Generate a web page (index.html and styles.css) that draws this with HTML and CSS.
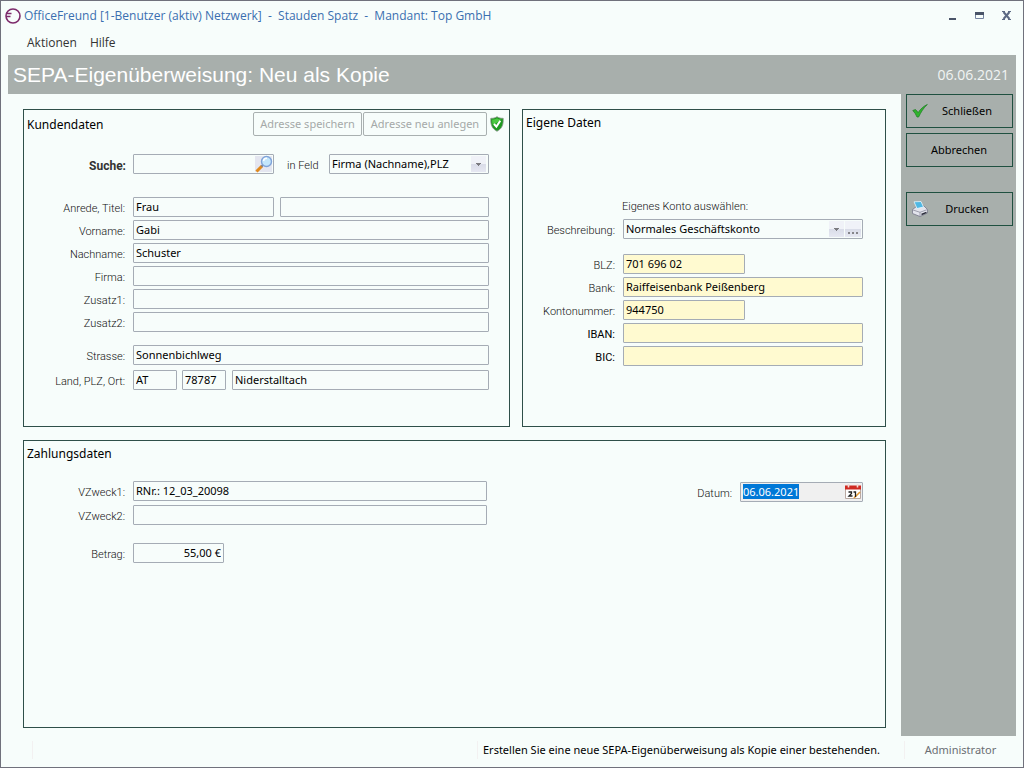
FILE: index.html
```html
<!DOCTYPE html>
<html lang="de">
<head>
<meta charset="utf-8">
<title>OfficeFreund</title>
<link rel="stylesheet" href="styles.css">
</head>
<body>
<div class="window">
  <header class="titlebar">
    <svg class="logo" viewBox="0 0 16 16" width="16" height="16" aria-hidden="true">
      <circle cx="8" cy="8" r="7" fill="none" stroke="#7d2a6b" stroke-width="1.6"/>
      <path d="M1 5.500H6.500M1 8.500H5.500" fill="none" stroke="#7d2a6b" stroke-width="1.4"/>
    </svg>
    <h1 class="caption">OfficeFreund [1-Benutzer (aktiv) Netzwerk] &nbsp;-&nbsp; Stauden Spatz &nbsp;-&nbsp; Mandant: Top GmbH</h1>
    <div class="window-buttons">
      <button type="button" aria-label="Minimieren"><svg viewBox="0 0 10 10" width="10" height="10"><path d="M1 7H8V9H1Z" fill="#4a5468"/></svg></button>
      <button type="button" aria-label="Maximieren"><svg viewBox="0 0 10 10" width="10" height="10"><path d="M.5 1.500H8.500V7.500H.5Z" fill="#f7fdfb" stroke="#7583a0"/><path d="M0 1H9V4H0Z" fill="#4a5468"/></svg></button>
      <button type="button" aria-label="Fenster schließen"><svg viewBox="0 0 10 10" width="10" height="10"><path d="M1.500 1L7.500 8M7.500 1L1.500 8" stroke="#5d6a84" stroke-width="2"/><path d="M0 .5H3M6 .5H9M0 8.500H3M6 8.500H9" stroke="#5d6a84"/></svg></button>
    </div>
  </header>
  <nav class="menubar">
    <button type="button">Aktionen</button>
    <button type="button">Hilfe</button>
  </nav>
  <div class="banner">
    <h2>SEPA-Eigenüberweisung: Neu als Kopie</h2>
    <time datetime="2021-06-06">06.06.2021</time>
  </div>
  <div class="body">
    <main class="content">
      <section class="panel customer">
        <div class="panel-head">
          <h3>Kundendaten</h3>
          <button type="button" class="flat" disabled>Adresse speichern</button>
          <button type="button" class="flat wide" disabled>Adresse neu anlegen</button>
          <svg class="shield" viewBox="0 0 14 16" width="14" height="16" aria-hidden="true">
            <path d="M7 .7C9 2 11 2.400 13.200 2.300C13.500 8 12.500 12.500 7 15.300C1.500 12.500 .5 8 .8 2.300C3 2.400 5 2 7 .7Z" fill="#1f9a20" stroke="#8a938c" stroke-width=".8"/>
            <path d="M7 2.200C5.500 3.200 4 3.500 2.200 3.600C2.100 6 2.300 7.500 3 9.300L11.700 3.600C10 3.500 8.500 3.200 7 2.200Z" fill="#4cc842"/>
            <path d="M4 8L6.400 10.600L10.300 4.800" fill="none" stroke="#fff" stroke-width="2"/>
          </svg>
        </div>
        <div class="row search">
          <label for="suche" class="strong">Suche:</label>
          <div class="box">
            <input id="suche" type="text">
            <button type="button" class="in-box" aria-label="Suchen">
              <svg viewBox="0 0 18 18" width="18" height="18"><path d="M0 1H17V17H0Z" fill="#e4e6f0"/><path d="M1.500 16.500L7 11" stroke="#e08a1e" stroke-width="3"/><path d="M6.500 11.500L8 10" stroke="#7b808c" stroke-width="2"/><circle cx="11.500" cy="6.500" r="5" fill="#c3e6fb" stroke="#7fa3d8" stroke-width="1.400"/><path d="M8.500 6A3.200 3.200 0 0 1 12 3.400" fill="none" stroke="#fff" stroke-width="1.500"/></svg>
            </button>
          </div>
          <label for="feld" class="mid">in Feld</label>
          <select id="feld"><option>Firma (Nachname),PLZ</option></select>
        </div>
        <div class="fields">
          <div class="row title-row"><label for="anrede">Anrede, Titel:</label><input id="anrede" type="text" value="Frau"><input type="text" aria-label="Titel"></div>
          <div class="row"><label for="vorname">Vorname:</label><input id="vorname" type="text" value="Gabi"></div>
          <div class="row"><label for="nachname">Nachname:</label><input id="nachname" type="text" value="Schuster"></div>
          <div class="row"><label for="firma">Firma:</label><input id="firma" type="text"></div>
          <div class="row"><label for="zusatz1">Zusatz1:</label><input id="zusatz1" type="text"></div>
          <div class="row"><label for="zusatz2">Zusatz2:</label><input id="zusatz2" type="text"></div>
        </div>
        <div class="fields address">
          <div class="row"><label for="strasse">Strasse:</label><input id="strasse" type="text" value="Sonnenbichlweg"></div>
          <div class="row city-row"><label for="land">Land, PLZ, Ort:</label><input id="land" type="text" value="AT"><input type="text" aria-label="PLZ" value="78787"><input type="text" aria-label="Ort" value="Niderstalltach"></div>
        </div>
      </section>

      <section class="panel own">
        <h3>Eigene Daten</h3>
        <p class="hint">Eigenes Konto auswählen:</p>
        <div class="row account">
          <label for="konto">Beschreibung:</label>
          <div class="box">
            <select id="konto"><option>Normales Geschäftskonto</option></select>
            <button type="button" class="in-box dots" aria-label="Konten bearbeiten"><svg viewBox="0 0 12 4" width="12" height="4"><path d="M1 1H3V3H1ZM5 1H7V3H5ZM9 1H11V3H9Z" fill="#85858a"/></svg></button>
          </div>
        </div>
        <div class="fields bank">
          <div class="row"><label for="blz">BLZ:</label><input id="blz" class="short" type="text" value="701 696 02"></div>
          <div class="row"><label for="bank">Bank:</label><input id="bank" type="text" value="Raiffeisenbank Peißenberg"></div>
          <div class="row"><label for="nummer">Kontonummer:</label><input id="nummer" class="short" type="text" value="944750"></div>
          <div class="row"><label for="iban" class="dark">IBAN:</label><input id="iban" type="text"></div>
          <div class="row"><label for="bic" class="dark">BIC:</label><input id="bic" type="text"></div>
        </div>
      </section>

      <section class="panel payment">
        <h3>Zahlungsdaten</h3>
        <div class="payment-cols">
          <div class="fields purpose">
            <div class="row"><label for="vz1">VZweck1:</label><input id="vz1" type="text" value="RNr.: 12_03_20098"></div>
            <div class="row"><label for="vz2">VZweck2:</label><input id="vz2" type="text"></div>
            <div class="row amount"><label for="betrag">Betrag:</label><input id="betrag" type="text" value="55,00 €"></div>
          </div>
          <div class="date">
            <label for="datum">Datum:</label>
            <div class="box">
              <input id="datum" type="text" value="06.06.2021">
              <button type="button" class="in-box" aria-label="Kalender">
                <svg viewBox="0 0 16 16" width="16" height="16"><path d="M.5 3.500H15.500V14.500H.5Z" fill="#fff" stroke="#b9a9a2"/><path d="M0 1.500H16V5.500H0Z" fill="#cf2a22"/><path d="M3.500 0V3.500M12.500 0V3.500" stroke="#f3dcd8" stroke-width="1.600"/><path d="M9 14L15 8" stroke="#e59a35" stroke-width="1.600"/><path d="M3.500 8H6.500L6.500 9.500L4 12H7.500M8.500 8H10.500V13" fill="none" stroke="#222" stroke-width="1.300"/></svg>
              </button>
            </div>
          </div>
        </div>
      </section>
    </main>
    <aside class="actions">
      <button type="button" class="action">
        <svg viewBox="0 0 16 16" width="16" height="16" aria-hidden="true"><path d="M.8 7.500L3.500 6.500L6.200 9.600C8.500 6 11.500 3.200 15.300 1.500C11.500 5 9 9 6.600 14L5 14C4 11.500 2.700 9.400 .8 7.500Z" fill="#2fb52c" stroke="#25802a" stroke-width=".8"/></svg>
        <span>Schließen</span>
      </button>
      <button type="button" class="action"><span>Abbrechen</span></button>
      <button type="button" class="action print">
        <svg viewBox="0 0 16 16" width="16" height="16" aria-hidden="true"><path d="M.5 8.500L4.500 5.500L12 5L15.500 8.500V12L8 15.500L.5 12.500Z" fill="#e3e4ec" stroke="#77798a" stroke-width=".8"/><path d="M2 .8L9 .5L11.500 6L5 7.500Z" fill="#4fb8e4" stroke="#e9f6fb" stroke-width=".8"/><path d="M.5 8.800L8 11.300L15.500 8.500M8 11.300V15.500" fill="none" stroke="#8a8c9c" stroke-width=".8"/><path d="M9.500 13.500L14.500 11.300" stroke="#2b2d3a" stroke-width="1.400"/></svg>
        <span>Drucken</span>
      </button>
    </aside>
  </div>
  <footer class="statusbar">
    <span class="cell spacer"></span>
    <span class="cell message">Erstellen Sie eine neue SEPA-Eigenüberweisung als Kopie einer bestehenden.</span>
    <span class="cell user">Administrator</span>
  </footer>
</div>
<script src="app.js"></script>
</body>
</html>
```
FILE: styles.css
```css
* { box-sizing: border-box; }

body {
  margin: 0;
  font: 12px/16px "Noto Sans", "Open Sans", sans-serif;
  color: #000;
  background: #f7fdfb;
}

h1, h2, h3, p { margin: 0; font-weight: 400; }
button, input, select { font: inherit; font-size: 11px; color: inherit; }
button { padding: 0; border: 0; background: none; }

.window {
  display: flex;
  flex-direction: column;
  min-height: 100vh;
  border: 1px solid #70717c;
}

.titlebar {
  display: flex;
  align-items: center;
  height: 30px;
  padding: 0 11px 0 4px;
}
.caption {
  flex: 1;
  margin-left: 3px;
  font: 12px/16px "Open Sans", "Noto Sans", sans-serif;
  color: #3a6fb0;
}
.window-buttons { display: flex; gap: 17px; }
.window-buttons button { display: flex; width: 10px; }

.menubar {
  display: flex;
  align-items: center;
  gap: 13px;
  height: 24px;
  padding-left: 26px;
  color: #333;
}
.menubar button { font: 12px/16px "Open Sans", "Noto Sans", sans-serif; }

.banner {
  display: flex;
  align-items: center;
  justify-content: space-between;
  height: 39px;
  margin: 0 7px;
  padding: 0 7px 0 5px;
  color: #fff;
  background: #a8afac;
}
.banner h2 { font: 21px/24px "Liberation Sans", Arial, sans-serif; }
.banner time { font: 14px/18px "Open Sans", "Noto Sans", sans-serif; color: #f1f4f3; }

.body { display: flex; flex: 1; margin: 0 7px; }

.content {
  flex: 1;
  display: grid;
  grid-template-columns: 487fr 364fr;
  grid-template-rows: auto 1fr;
  gap: 13px 12px;
  padding: 15px 15px 8px;
}

.panel { border: 1px solid #2f4f49; }
.panel h3 { font-size: 12px; line-height: 18px; }

.row { display: flex; align-items: center; }
.row > input { flex: 1; min-width: 0; }
.fields { display: flex; flex-direction: column; gap: 3px; }

label, .hint {
  font-family: Roboto, sans-serif;
  font-size: 11px;
  font-weight: 300;
  color: #111;
}
.row > label:first-child {
  flex: none;
  width: 109px;
  padding: 3px 8px 0 0;
  text-align: right;
}
.row > label.strong { font-size: 12px; font-weight: 700; color: #333; padding-right: 7px; }
label.dark { font-weight: 400; color: #000; }

input, select, .box {
  height: 20px;
  border: 1px solid #a5acb5;
  border-radius: 1px;
  background: #f7fdfb;
  outline: 0;
}
input { width: 100%; padding: 0 2px 1px; }
select {
  appearance: none;
  padding: 0 2px;
  background:
    linear-gradient(#7b7b80, #7b7b80) no-repeat right 7px top 8px / 5px 1px,
    linear-gradient(#7b7b80, #7b7b80) no-repeat right 8px top 9px / 3px 1px,
    linear-gradient(#7b7b80, #7b7b80) no-repeat right 9px top 10px / 1px 1px,
    linear-gradient(#f0f2f8 50%, #d9dce8 50%, #e6e8f2) no-repeat right 2px top 1px / 15px 16px,
    #f7fdfb;
}
.box { display: flex; }
.box input, .box select { flex: 1; min-width: 0; height: 18px; border: 0; }
.box select { background-position: right 5px top 8px, right 6px top 9px, right 7px top 10px, right 0 top 1px; }
.in-box {
  display: flex;
  align-items: center;
  justify-content: center;
  width: 18px;
}

.customer { padding: 2px 20px 36px 0; }
.panel-head { display: flex; align-items: center; margin-right: -15px; }
.panel-head h3 { flex: 1; padding: 1px 0 0 3px; }
.flat {
  width: 109px;
  height: 24px;
  margin-right: 1px;
  border: 1px solid #a9b0b0;
  border-radius: 2px;
  color: #a5a9a8;
}
.flat.wide { width: 124px; margin-right: 3px; }

.search { margin-top: 18px; }
.search .box { flex: 1 1 141px; }
.search select { flex: 1 1 160px; min-width: 0; }
.search .mid { flex: none; width: 55px; padding: 3px 0 0 13px; }
.customer .fields { margin-top: 23px; }
.title-row input:nth-of-type(1) { flex: 1 1 141px; margin-right: 6px; }
.title-row input:nth-of-type(2) { flex: 1 1 209px; }
.customer .address { gap: 5px; margin-top: 13px; }
.city-row input { margin-right: 5px; }
.city-row input:nth-of-type(-n+2) { flex: 0 0 44px; }
.city-row input:nth-of-type(2) { margin-right: 6px; }
.city-row input:last-child { margin-right: 0; }

.own { padding: 4px 22px 0 0; }
.own h3 { padding-left: 3px; }
.own .hint { margin-top: 67px; padding-left: 99px; }
.own .row > label:first-child { width: 100px; }
.account { margin-top: 4px; }
.account .box { flex: 1; }
.dots { align-items: flex-end; margin: 1px; padding-bottom: 2px; width: 16px; background: linear-gradient(#f0f2f8 50%, #d9dce8 50%, #e6e8f2); }
.bank { margin-top: 15px; }
.bank input { background: #fffad0; }
.bank .row .short { flex: 0 0 122px; }

.payment { grid-column: 1 / -1; padding: 4px 22px 0 0; }
.payment h3 { padding-left: 3px; }
.payment-cols { display: flex; justify-content: space-between; margin-top: 18px; }
.purpose { flex: 0 1 463px; gap: 4px; }
.amount { margin-top: 14px; }
.amount input { flex: 0 0 91px; text-align: right; }
.date { display: flex; align-items: center; align-self: flex-start; margin-top: 1px; }
.date label { padding: 3px 8px 0 0; }
.date .box { width: 123px; background: #f0f0f0; }
.date input { background: none; }
.date input::selection { color: #fff; background: #0078d7; }

.actions {
  display: flex;
  flex-direction: column;
  gap: 5px;
  width: 115px;
  padding: 0 3px 0 5px;
  background: #a8afac;
}
.action {
  display: flex;
  align-items: center;
  height: 34px;
  padding: 0 6px 0 5px;
  border: 1px solid #1f5040;
}
.action span { flex: 1; text-align: center; }
.print { margin-top: 20px; }

.statusbar { display: flex; align-items: center; height: 31px; padding: 0 7px 4px 31px; font-size: 11px; }
.cell { height: 18px; line-height: 18px; border-left: 1px solid #f3f1f1; }
.spacer { flex: 1; }
.message { padding: 0 24px 0 5px; }
.user { width: 112px; text-align: center; color: #6b6e73; }
```
FILE: app.js
```js
const dateField = document.getElementById("datum");
dateField.focus();
dateField.select();
```
